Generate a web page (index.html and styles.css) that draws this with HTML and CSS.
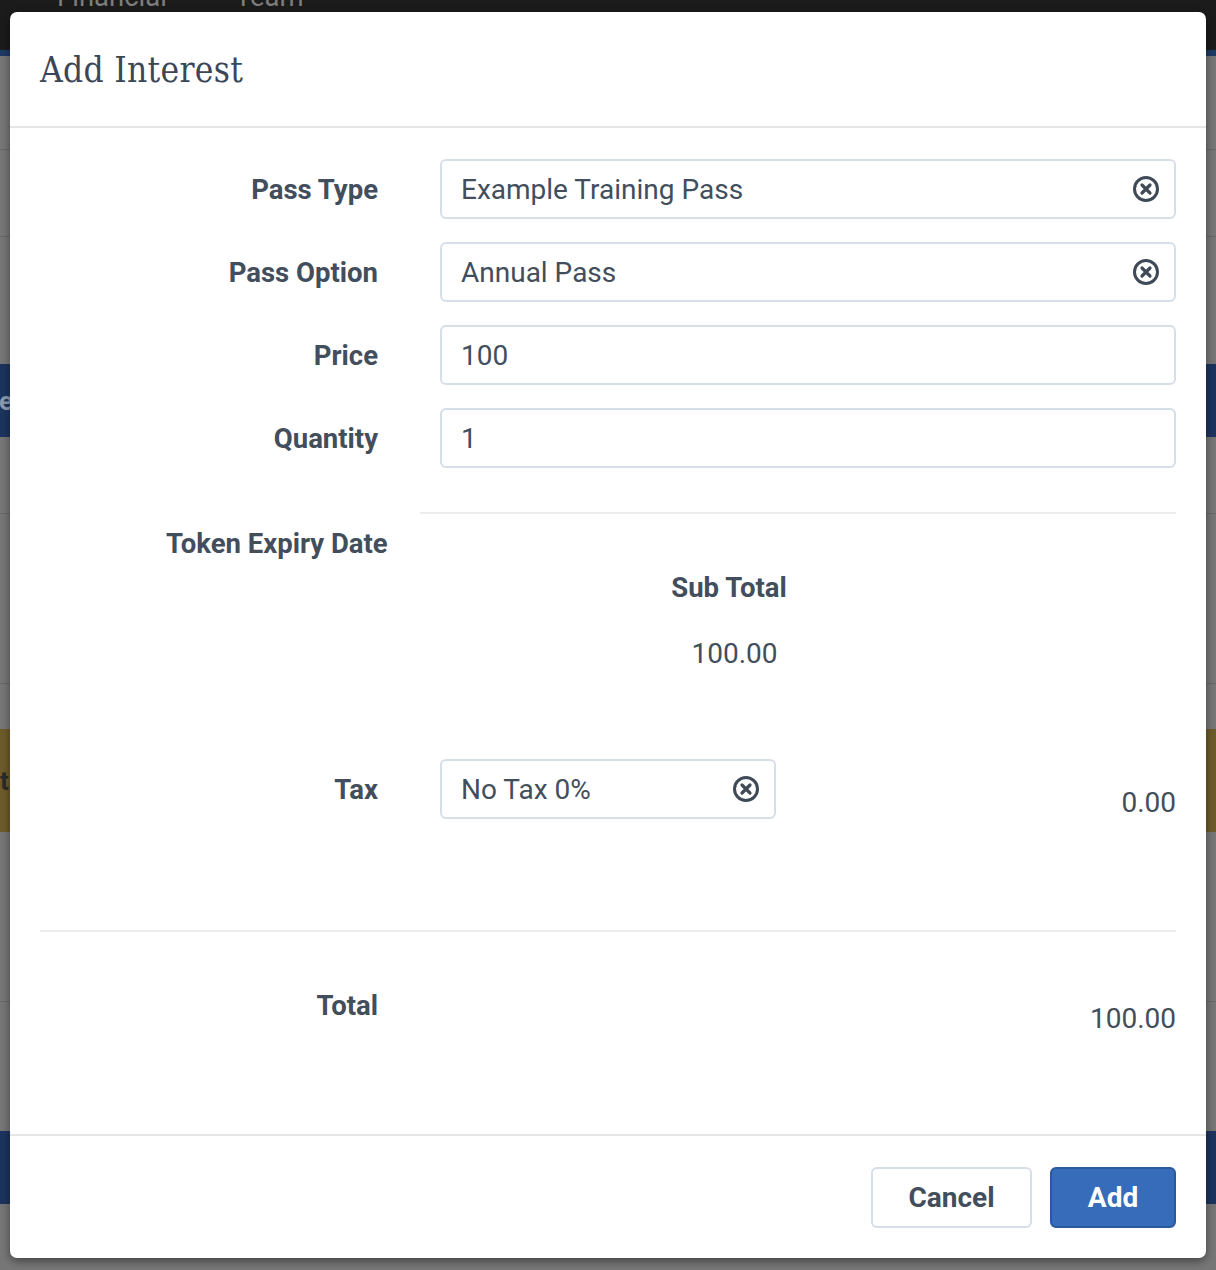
FILE: index.html
```html
<!DOCTYPE html>
<html>
<head>
<meta charset="utf-8">
<link rel="stylesheet" href="styles.css">
</head>
<body>
<div class="page">
  <div class="topbar">
    <span class="nav-item nav-fin">Financial</span>
    <span class="nav-item nav-team">Team</span>
  </div>
  <div class="topline"></div>
  <div class="bg-row h94"></div>
  <div class="bg-row h87"></div>
  <div class="bg-row h127 noline"></div>
  <div class="bg-band blue h73"><span class="band-text light">Member</span></div>
  <div class="bg-row h77"></div>
  <div class="bg-row h170"></div>
  <div class="bg-row h45 noline"></div>
  <div class="bg-band olive h103"><span class="band-text dark">Status</span></div>
  <div class="bg-row h170"></div>
  <div class="bg-row h129 noline"></div>
  <div class="bg-band blue h73"></div>
  <div class="bg-row h65 noline"></div>

  <div class="modal">
    <div class="modal-header">
      <h1 class="modal-title">Add Interest</h1>
    </div>
    <div class="modal-body">
      <div class="form-row">
        <label class="form-label">Pass Type</label>
        <div class="select">
          <span class="select-value">Example Training Pass</span>
          <svg class="clear-icon" viewBox="0 0 28 28" width="28" height="28"><circle cx="14" cy="14" r="11.5" fill="none" stroke="#3f4a58" stroke-width="3"/><path d="M10 10 L18 18 M18 10 L10 18" stroke="#3f4a58" stroke-width="3.2" stroke-linecap="round"/></svg>
        </div>
      </div>
      <div class="form-row">
        <label class="form-label">Pass Option</label>
        <div class="select">
          <span class="select-value">Annual Pass</span>
          <svg class="clear-icon" viewBox="0 0 28 28" width="28" height="28"><circle cx="14" cy="14" r="11.5" fill="none" stroke="#3f4a58" stroke-width="3"/><path d="M10 10 L18 18 M18 10 L10 18" stroke="#3f4a58" stroke-width="3.2" stroke-linecap="round"/></svg>
        </div>
      </div>
      <div class="form-row">
        <label class="form-label">Price</label>
        <div class="input">100</div>
      </div>
      <div class="form-row">
        <label class="form-label">Quantity</label>
        <div class="input">1</div>
      </div>
      <div class="sep-short"></div>
      <div class="token-label">Token Expiry Date</div>
      <div class="subtotal">
        <div class="subtotal-head">Sub Total</div>
        <div class="subtotal-val">100.00</div>
      </div>
      <div class="tax-row">
        <label class="form-label">Tax</label>
        <div class="select tax-select">
          <span class="select-value">No Tax 0%</span>
          <svg class="clear-icon" viewBox="0 0 28 28" width="28" height="28"><circle cx="14" cy="14" r="11.5" fill="none" stroke="#3f4a58" stroke-width="3"/><path d="M10 10 L18 18 M18 10 L10 18" stroke="#3f4a58" stroke-width="3.2" stroke-linecap="round"/></svg>
        </div>
        <div class="tax-amount">0.00</div>
      </div>
      <div class="sep-full"></div>
      <div class="total-row">
        <label class="form-label">Total</label>
        <div class="total-amount">100.00</div>
      </div>
    </div>
    <div class="modal-footer">
      <button class="btn btn-default">Cancel</button>
      <button class="btn btn-primary">Add</button>
    </div>
  </div>
</div>
</body>
</html>
```
FILE: styles.css
```css
* { box-sizing: border-box; }
html, body { margin: 0; padding: 0; }
body { font-family: Roboto, "Liberation Sans", sans-serif; }

.page {
  position: relative;
  width: 1216px;
  height: 1270px;
  overflow: hidden;
  background: #777777;
}

/* background page (dimmed) */
.topbar {
  height: 50px;
  background: #1b1b1b;
  display: flex;
  gap: 68px;
  padding-left: 57px;
  overflow: hidden;
}
.nav-item {
  font-size: 27.5px;
  line-height: 28px;
  color: #7d7d7d;
  margin-top: -17px;
}
.topline { height: 6px; background: #1d3a66; }
.bg-row { background: #777777; border-bottom: 1px solid #6a6a6a; }
.bg-row.noline { border-bottom: none; }
.bg-band { position: relative; overflow: hidden; }
.bg-band.blue { background: #1c355e; }
.bg-band.olive { background: #6e5c2b; }
.band-text {
  position: absolute;
  top: 50%;
  transform: translateY(-50%);
  font-size: 26px;
  font-weight: 700;
  white-space: nowrap;
}
.band-text.light { left: -75px; color: #8e9bb0; }
.band-text.dark { left: -16px; color: #2b2b2b; }
.h45 { height: 45px; } .h65 { height: 65px; } .h73 { height: 73px; }
.h77 { height: 77px; } .h87 { height: 87px; } .h94 { height: 94px; }
.h103 { height: 103px; } .h127 { height: 127px; } .h129 { height: 129px; }
.h170 { height: 170px; }

/* modal */
.modal {
  position: absolute;
  left: 10px;
  top: 12px;
  width: 1196px;
  height: 1246px;
  background: #ffffff;
  border-radius: 7px;
  box-shadow: 0 3px 10px rgba(0,0,0,0.45);
  display: flex;
  flex-direction: column;
  color: #434e5c;
}
.modal-header {
  height: 116px;
  border-bottom: 2px solid #e6e6e6;
  padding: 0 30px;
  display: flex;
  align-items: center;
}
.modal-title {
  margin: 2px 0 0 0;
  font-family: "DejaVu Serif", "Liberation Serif", serif;
  font-stretch: condensed;
  font-weight: 300;
  font-size: 35px;
  color: #3b4757;
  letter-spacing: 0.3px;
}
.modal-body {
  flex: 1;
  padding: 31px 30px 0 30px;
}
.form-row {
  display: grid;
  grid-template-columns: 338px 1fr;
  column-gap: 62px;
  align-items: center;
  margin-bottom: 23px;
}
.form-label {
  text-align: right;
  font-weight: 700;
  font-size: 27.5px;
  color: #434e5c;
}
.select, .input {
  height: 60px;
  border: 2px solid #d6dee7;
  border-radius: 6px;
  display: flex;
  align-items: center;
  padding: 0 14px 0 19px;
  font-size: 28px;
  color: #434e5c;
}
.select-value { flex: 1; }
.clear-icon { display: block; flex: none; }

.sep-short {
  height: 2px;
  background: #ededed;
  margin: 44px 0 0 380px;
}
.token-label {
  font-weight: 700;
  font-size: 27.5px;
  margin: 15px 0 0 126px;
  line-height: 30px;
}
.subtotal {
  width: 140px;
  margin: 14px 0 0 619px;
  text-align: center;
}
.subtotal-head {
  font-weight: 700;
  font-size: 27.5px;
  line-height: 30px;
}
.subtotal-val {
  font-size: 28px;
  line-height: 30px;
  margin-top: 36px;
  padding-left: 11px;
}
.tax-row {
  display: grid;
  grid-template-columns: 338px 336px 1fr;
  column-gap: 62px;
  align-items: center;
  margin-top: 90px;
}
.tax-amount {
  text-align: right;
  font-size: 28px;
  margin-top: 26px;
  margin-left: -62px;
}
.sep-full {
  height: 2px;
  background: #ededed;
  margin-top: 111px;
}
.total-row {
  display: grid;
  grid-template-columns: 338px 1fr;
  column-gap: 62px;
  margin-top: 57px;
}
.total-amount {
  text-align: right;
  font-size: 28px;
  padding-top: 13px;
}

.modal-footer {
  height: 124px;
  border-top: 2px solid #e6e6e6;
  display: flex;
  justify-content: flex-end;
  align-items: center;
  gap: 18px;
  padding: 0 30px;
}
.btn {
  height: 61px;
  border-radius: 6px;
  font-family: Roboto, "Liberation Sans", sans-serif;
  font-weight: 700;
  font-size: 28px;
  padding: 0;
}
.btn-default {
  width: 161px;
  background: #ffffff;
  border: 2px solid #d6dee7;
  color: #434e5c;
}
.btn-primary {
  width: 126px;
  background: #366cb9;
  border: 2px solid #2b5a9c;
  color: #ffffff;
}
```
